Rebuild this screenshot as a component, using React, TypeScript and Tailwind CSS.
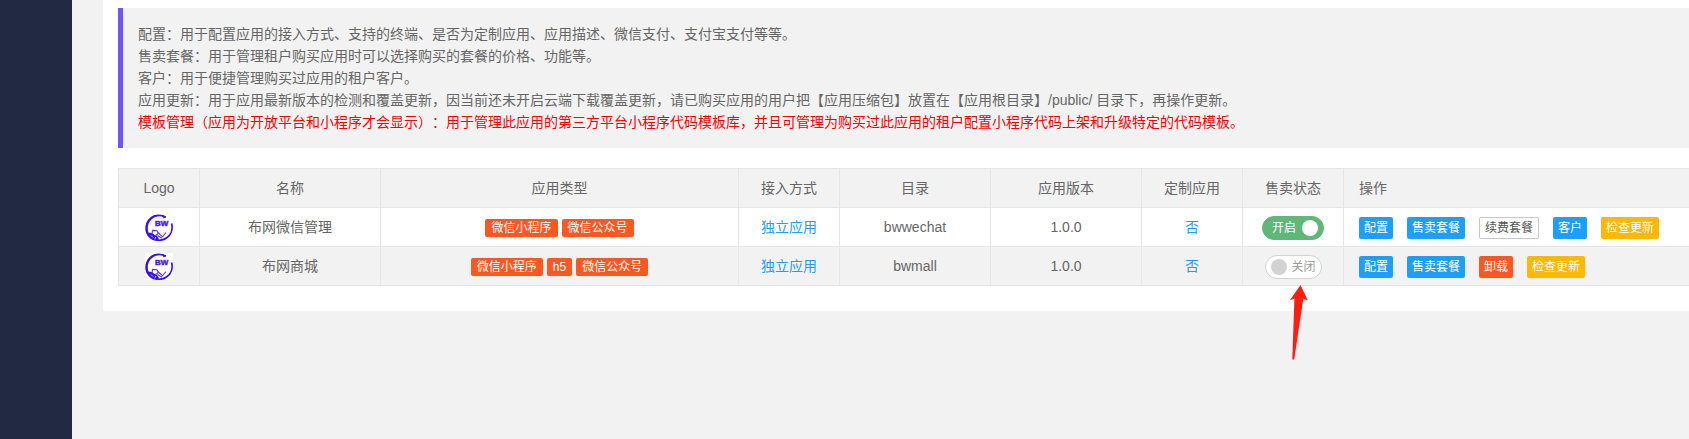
import React, { useState } from 'react';

type Tone = 'blue' | 'plain' | 'red' | 'yellow';

interface Action {
  label: string;
  tone: Tone;
}

interface AppRow {
  name: string;
  types: string[];
  access: string;
  dir: string;
  version: string;
  custom: string;
  onSale: boolean;
  marked?: boolean;
  actions: Action[];
}

const toneClasses: Record<Tone, string> = {
  blue: 'bg-[#1e9fff] text-white',
  plain: 'bg-white text-[#555] border border-[#c9c9c9]',
  red: 'bg-[#ff5722] text-white',
  yellow: 'bg-[#ffb800] text-white',
};

const notes = [
  '配置：用于配置应用的接入方式、支持的终端、是否为定制应用、应用描述、微信支付、支付宝支付等等。',
  '售卖套餐：用于管理租户购买应用时可以选择购买的套餐的价格、功能等。',
  '客户：用于便捷管理购买过应用的租户客户。',
  '应用更新：用于应用最新版本的检测和覆盖更新，因当前还未开启云端下载覆盖更新，请已购买应用的用户把【应用压缩包】放置在【应用根目录】/public/ 目录下，再操作更新。',
];

const columns = [
  { title: 'Logo', className: 'w-[81px]' },
  { title: '名称', className: 'w-[181px]' },
  { title: '应用类型', className: 'w-[358px]' },
  { title: '接入方式', className: 'w-[101px]' },
  { title: '目录', className: 'w-[151px]' },
  { title: '应用版本', className: 'w-[151px]' },
  { title: '定制应用', className: 'w-[101px]' },
  { title: '售卖状态', className: 'w-[101px]' },
];

const rows: AppRow[] = [
  {
    name: '布网微信管理',
    types: ['微信小程序', '微信公众号'],
    access: '独立应用',
    dir: 'bwwechat',
    version: '1.0.0',
    custom: '否',
    onSale: true,
    actions: [
      { label: '配置', tone: 'blue' },
      { label: '售卖套餐', tone: 'blue' },
      { label: '续费套餐', tone: 'plain' },
      { label: '客户', tone: 'blue' },
      { label: '检查更新', tone: 'yellow' },
    ],
  },
  {
    name: '布网商城',
    types: ['微信小程序', 'h5', '微信公众号'],
    access: '独立应用',
    dir: 'bwmall',
    version: '1.0.0',
    custom: '否',
    onSale: false,
    marked: true,
    actions: [
      { label: '配置', tone: 'blue' },
      { label: '售卖套餐', tone: 'blue' },
      { label: '卸载', tone: 'red' },
      { label: '检查更新', tone: 'yellow' },
    ],
  },
];

const Logo: React.FC = () => (
  <svg className="mx-auto block h-[27px] w-7 bg-white" viewBox="0 0 28 27" fill="none" aria-hidden="true">
    <path d="M21 2.600C16 -.5 9 -.3 4.600 4C-.8 9.200-1.200 18 3.600 23C6.500 26 10 27 14 27L14 25.400C9.300 25.200 5.800 23 4 19.500C1.700 15 2.600 9.200 6.500 5.600C10 2.400 15 1.400 18.500 3.300Z" fill="#3a0ff0" />
    <path d="M17 1.200L21 3L18 3.800" stroke="#3a0ff0" strokeWidth="1" />
    <path d="M26.600 9.500C28 15 26.200 20.800 21.500 24C19.500 25.500 17 26.300 14 26.300" stroke="#3a0ff0" strokeWidth="1.700" />
    <path d="M3 19C6 18 8.500 19.200 9.500 21C11.800 21.300 14 23.500 14 26.800C9 27 5 24.500 3 19Z" fill="#3a0ff0" />
    <path d="M6 21.500L8 23.500M10.800 23L9.800 25.200" stroke="#fff" strokeWidth=".8" />
    <path d="M7 20L7.500 16.400L12 16.800L13.300 19.500L10.500 21.500M13 18.500L17.500 22.800L21 18.600M12.500 21.500L17 24.300" stroke="#5a38f2" strokeWidth="1.100" />
    <text x="10" y="12" fontFamily="Liberation Sans, sans-serif" fontSize="8" fontWeight="bold" fill="#4a22ee" stroke="#4a22ee" strokeWidth=".5">BW</text>
  </svg>
);

const Arrow: React.FC = () => (
  <svg className="pointer-events-none absolute top-[38px] left-[46px] h-[75px] w-5" viewBox="0 0 20 75" aria-hidden="true">
    <path d="M11.500 0L18.900 15.600L14.300 13.800L5.200 74.500H3.300L5.400 13.600L.8 15.200Z" fill="#ff1e12" />
  </svg>
);

const SaleSwitch: React.FC<{ name: string; initial: boolean }> = ({ name, initial }) => {
  const [on, setOn] = useState(initial);

  return (
    <label
      className={`relative inline-flex h-6 cursor-pointer items-center rounded-full border text-xs ${on ? 'w-[62px] flex-row-reverse justify-between border-[#5fb878] bg-[#5fb878] pr-[5px] pl-[9px] text-white' : 'w-[57px] justify-between border-[#d2d2d2] bg-white px-[5px] text-[#999]'}`}
    >
      <input
        type="checkbox"
        className="sr-only"
        aria-label={`${name} 售卖状态`}
        checked={on}
        onChange={() => setOn(!on)}
      />
      <span className={`h-4 w-4 rounded-full ${on ? 'bg-white' : 'bg-[#d2d2d2]'}`} />
      <span>{on ? '开启' : '关闭'}</span>
    </label>
  );
};

const cell = 'h-[39px] border border-[#e6e6e6] p-0 text-center font-normal';

export default function App() {
  return (
    <div className="flex min-h-screen bg-[#f2f2f2] font-['Liberation_Sans','Noto_Sans_CJK_SC',sans-serif] text-sm text-[#666] [text-spacing-trim:space-all]">
      <aside className="w-[72px] shrink-0 bg-[#222943]" />

      <main className="min-w-0 flex-1 overflow-hidden pl-[31px]">
        <section className="rounded-bl-xs bg-white pt-2 pb-[25px] pl-[15px]">
          <blockquote className="mb-5 border-l-[5px] border-[#6f55ff] bg-[#f2f2f2] p-[15px] leading-[22px]">
            {notes.map((note) => (
              <p key={note}>{note}</p>
            ))}
            <p className="text-[#ff0000]">
              模板管理（应用为开放平台和小程序才会显示）：用于管理此应用的第三方平台小程序代码模板库，并且可管理为购买过此应用的租户配置小程序代码上架和升级特定的代码模板。
            </p>
          </blockquote>

          <table className="w-full table-fixed border-collapse leading-5">
            <thead>
              <tr className="bg-[#f2f2f2]">
                {columns.map((col) => (
                  <th key={col.title} className={`${cell} ${col.className}`}>{col.title}</th>
                ))}
                <th className="h-[39px] border-y border-[#e6e6e6] px-[15px] py-0 text-left font-normal">操作</th>
              </tr>
            </thead>
            <tbody>
              {rows.map((row) => (
                <tr key={row.dir} className="bg-white even:bg-[#f2f2f2]">
                  <td className={cell}><Logo /></td>
                  <td className={cell}>{row.name}</td>
                  <td className={cell}>
                    <div className="flex justify-center gap-1 pt-0.5">
                      {row.types.map((type) => (
                        <span key={type} className="h-[18px] rounded-xs bg-[#ff5722] px-1.5 text-xs leading-[18px] text-white">{type}</span>
                      ))}
                    </div>
                  </td>
                  <td className={`${cell} text-[#1e9fff]`}>{row.access}</td>
                  <td className={cell}>{row.dir}</td>
                  <td className={cell}>{row.version}</td>
                  <td className={`${cell} text-[#1e9fff]`}>{row.custom}</td>
                  <td className={`${cell} relative`}>
                    <div className="flex justify-center pt-0.5">
                      <SaleSwitch name={row.name} initial={row.onSale} />
                    </div>
                    {row.marked && <Arrow />}
                  </td>
                  <td className="h-[39px] border-y border-[#e6e6e6] px-[15px] py-0">
                    <div className="flex gap-3.5 pt-0.5">
                      {row.actions.map((action) => (
                        <button
                          key={action.label}
                          type="button"
                          className={`flex h-[22px] shrink-0 cursor-pointer items-center rounded-xs px-[5px] text-xs whitespace-nowrap ${toneClasses[action.tone]}`}
                        >
                          {action.label}
                        </button>
                      ))}
                    </div>
                  </td>
                </tr>
              ))}
            </tbody>
          </table>
        </section>
      </main>
    </div>
  );
}
